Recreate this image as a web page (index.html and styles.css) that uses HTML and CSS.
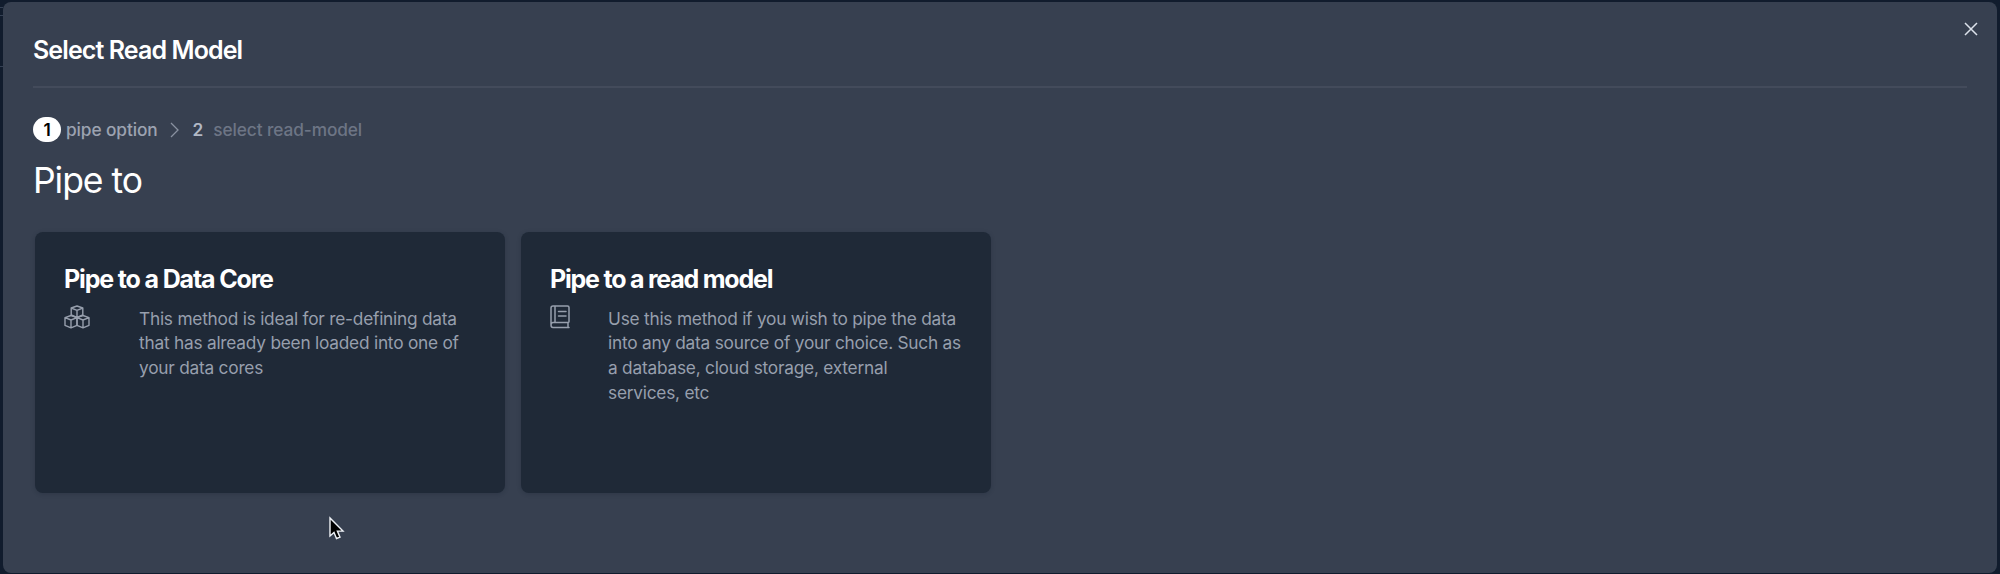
FILE: index.html
```html
<!DOCTYPE html>
<html lang="en">
<head>
<meta charset="utf-8">
<title>Select Read Model</title>
<link rel="stylesheet" href="styles.css">
</head>
<body>
<div class="edge edge-a"></div>
<div class="edge edge-b"></div>
<div class="edge edge-c"></div>
<main class="modal">
  <header class="modal-header">
    <h1 class="modal-title">Select Read Model</h1>
  </header>
  <button class="close" aria-label="Close">
    <svg width="14" height="14" viewBox="0 0 14 14" fill="none" stroke="currentColor" stroke-width="1.5"><path d="M1 1l12 12M13 1L1 13"/></svg>
  </button>
  <nav class="steps">
    <span class="badge">1</span>
    <span class="step-name">pipe option</span>
    <svg class="chevron" width="9" height="16" viewBox="0 0 9 16" fill="none" stroke="currentColor" stroke-width="1.3"><path d="M1 1l7 7-7 7"/></svg>
    <span class="step-number">2</span>
    <span class="step-name step-next">select read-model</span>
  </nav>
  <h2 class="section-title">Pipe to</h2>
  <section class="cards">
    <article class="card">
      <h3 class="card-title title-core">Pipe to a Data Core</h3>
      <div class="card-body">
        <svg class="icon icon-cubes" width="26" height="24" viewBox="0 0 26 24" fill="none" stroke="currentColor" stroke-width="1.4" stroke-linejoin="round">
          <path d="M13 1l5.800 2v7L13 12.500 7.200 10V3zM7.200 3L13 5.300 18.800 3M13 5.300v7.200"/>
          <path d="M7 10.500l6 2.200v7.600l-6 2.500-6-2.500v-7.600zM1 12.700L7 15l6-2.300M7 15v7.800"/>
          <path d="M19 10.500l6 2.200v7.600l-6 2.500-6-2.500v-7.600zM13 12.700l6 2.300 6-2.300M19 15v7.800"/>
        </svg>
        <p class="description">This method is ideal for re-defining data<br>that has already been loaded into one of<br>your data cores</p>
      </div>
    </article>
    <article class="card">
      <h3 class="card-title title-model">Pipe to a read model</h3>
      <div class="card-body">
        <svg class="icon icon-book" width="20" height="24" viewBox="0 0 20 24" fill="none" stroke="currentColor" stroke-width="1.500" stroke-linecap="round" stroke-linejoin="round">
          <path d="M3 1h14.500Q19 1 19 2.500v14q0 1-1 1H3q-2 0-2 2.500V3q0-2 2-2zM5 1v16.500M1 20q0 2.500 2 2.500h16M18 17.500v5M8.500 6.500H16M8.500 11H16"/>
        </svg>
        <p class="description">Use this method if you wish to pipe the data<br>into any data source of your choice. Such as<br>a database, cloud storage, external<br>services, etc</p>
      </div>
    </article>
  </section>
</main>
<svg class="pointer" width="17" height="25" viewBox="0 0 17 25" fill="#000" stroke="#eef1f6" stroke-width="1.400"><path d="M2 2v18l4-3.500L8.500 22.500l3.500-1.400-2.600-6H15z"/></svg>
</body>
</html>
```
FILE: styles.css
```css
* { box-sizing: border-box; }
body {
  margin: 0;
  padding: 2px 3px 1px;
  height: 574px;
  overflow: hidden;
  background: #111c2d;
  font-family: Inter, "Liberation Sans", sans-serif;
}
h1, h2, h3, p { margin: 0; white-space: nowrap; }
.modal {
  position: relative;
  height: 571px;
  padding: 0 30px;
  border-radius: 8px;
  background: #374050;
}
.modal-header {
  height: 86px;
  padding-top: 32px;
  border-bottom: 2px solid #434b5b;
}
.modal-title {
  font-size: 25px;
  line-height: 32px;
  font-weight: 600;
  letter-spacing: -0.9px;
  color: #fff;
}
.close {
  position: absolute;
  top: 20px;
  right: 19px;
  display: flex;
  padding: 0;
  border: 0;
  background: none;
  color: #dce2eb;
}
.steps {
  display: flex;
  align-items: center;
  height: 25px;
  margin-top: 29px;
  font-size: 17.3px;
  font-weight: 500;
  letter-spacing: -0.1px;
}
.badge {
  width: 28px;
  height: 25px;
  border-radius: 13px;
  background: #fff;
  color: #000;
  font-weight: 600;
  line-height: 25px;
  text-align: center;
}
.step-name { margin-left: 5px; color: #9ca3b1; white-space: nowrap; }
.chevron { margin-left: 12px; color: #8991a0; }
.step-number { margin-left: 14px; color: #b1b8c5; font-weight: 600; }
.step-next { margin-left: 10px; color: #6d7585; }
.section-title {
  margin-top: 18px;
  font-size: 35.5px;
  line-height: 42px;
  font-weight: 400;
  letter-spacing: -1.05px;
  color: #fff;
}
.cards { display: flex; gap: 16px; margin: 30px 0 0 2px; }
.card {
  width: 470px;
  height: 261px;
  padding: 31px 29px;
  border-radius: 8px;
  background: #1f2937;
  box-shadow: 0 1px 4px rgba(20, 28, 42, 0.25);
}
.card-title {
  font-size: 25px;
  line-height: 32px;
  font-weight: 700;
  letter-spacing: -1.22px;
  color: #fff;
}
.title-core { letter-spacing: -1.15px; }
.card-body { display: flex; margin-top: 10px; color: #979fad; }
.icon { flex: none; }
.icon-cubes { margin-right: 49px; }
.icon-book { margin-right: 38px; }
.description {
  margin-top: 1.5px;
  font-size: 17.3px;
  line-height: 24.7px;
  font-weight: 400;
  letter-spacing: -0.23px;
}
.edge { position: absolute; left: 0; width: 3px; height: 1px; background: #354154; }
.edge-a { top: 7px; }
.edge-b { top: 15px; }
.edge-c { top: 66px; }
.pointer { position: absolute; left: 328px; top: 516px; }
```
